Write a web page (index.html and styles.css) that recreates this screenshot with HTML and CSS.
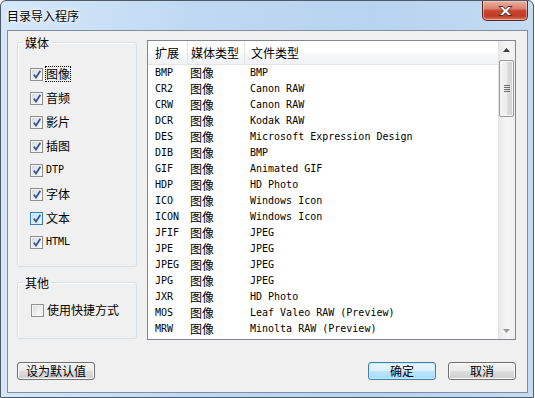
FILE: index.html
```html
<!DOCTYPE html>
<html lang="zh-CN">
<head>
    <meta charset="utf-8" />
    <title>目录导入程序</title>
    <link rel="stylesheet" href="styles.css">
</head>
<body>
    <div class="window">
        <div class="titlebar">
            <span class="title">目录导入程序</span>
            <div class="close">
                <svg width="17" height="12" viewBox="0 0 17 12"><path d="M2 1.5 H6 L8.5 4.2 L11 1.5 H15 L10.6 6 L15 10.5 H11 L8.5 7.8 L6 10.5 H2 L6.4 6 Z" fill="#fff" stroke="#5a2b25" stroke-width="1"/></svg>
            </div>
        </div>

        <div class="client">
            <div class="main">
                <div class="side">
                    <fieldset class="group media">
                        <legend>媒体</legend>
                        <div class="checks">
                            <div class="check"><span class="box on"></span><span class="label focus">图像</span></div>
                            <div class="check"><span class="box on"></span><span class="label">音频</span></div>
                            <div class="check"><span class="box on"></span><span class="label">影片</span></div>
                            <div class="check"><span class="box on"></span><span class="label">插图</span></div>
                            <div class="check"><span class="box on"></span><span class="label mono">DTP</span></div>
                            <div class="check"><span class="box on"></span><span class="label">字体</span></div>
                            <div class="check"><span class="box on hot"></span><span class="label">文本</span></div>
                            <div class="check"><span class="box on"></span><span class="label mono">HTML</span></div>
                        </div>
                    </fieldset>
                    <fieldset class="group other">
                        <legend>其他</legend>
                        <div class="check"><span class="box"></span><span class="label">使用快捷方式</span></div>
                    </fieldset>
                </div>

                <div class="listview">
                    <div class="lv-body">
                        <div class="lv-header">
                            <div class="hcell h1">扩展</div>
                            <div class="hcell h2">媒体类型</div>
                            <div class="hcell h3">文件类型</div>
                        </div>
                        <div class="lv-row"><span>BMP</span><span class="cn">图像</span><span>BMP</span></div>
                        <div class="lv-row"><span>CR2</span><span class="cn">图像</span><span>Canon RAW</span></div>
                        <div class="lv-row"><span>CRW</span><span class="cn">图像</span><span>Canon RAW</span></div>
                        <div class="lv-row"><span>DCR</span><span class="cn">图像</span><span>Kodak RAW</span></div>
                        <div class="lv-row"><span>DES</span><span class="cn">图像</span><span>Microsoft Expression Design</span></div>
                        <div class="lv-row"><span>DIB</span><span class="cn">图像</span><span>BMP</span></div>
                        <div class="lv-row"><span>GIF</span><span class="cn">图像</span><span>Animated GIF</span></div>
                        <div class="lv-row"><span>HDP</span><span class="cn">图像</span><span>HD Photo</span></div>
                        <div class="lv-row"><span>ICO</span><span class="cn">图像</span><span>Windows Icon</span></div>
                        <div class="lv-row"><span>ICON</span><span class="cn">图像</span><span>Windows Icon</span></div>
                        <div class="lv-row"><span>JFIF</span><span class="cn">图像</span><span>JPEG</span></div>
                        <div class="lv-row"><span>JPE</span><span class="cn">图像</span><span>JPEG</span></div>
                        <div class="lv-row"><span>JPEG</span><span class="cn">图像</span><span>JPEG</span></div>
                        <div class="lv-row"><span>JPG</span><span class="cn">图像</span><span>JPEG</span></div>
                        <div class="lv-row"><span>JXR</span><span class="cn">图像</span><span>HD Photo</span></div>
                        <div class="lv-row"><span>MOS</span><span class="cn">图像</span><span>Leaf Valeo RAW (Preview)</span></div>
                        <div class="lv-row"><span>MRW</span><span class="cn">图像</span><span>Minolta RAW (Preview)</span></div>
                    </div>
                    <div class="scrollbar">
                        <div class="arrow">
                            <svg width="7" height="4" viewBox="0 0 7 4"><path d="M0 4 L3.5 0 L7 4 Z" fill="#3c3c3c"/></svg>
                        </div>
                        <div class="thumb">
                            <svg width="6" height="7" viewBox="0 0 6 7"><path d="M0 0.5 H6 M0 2.5 H6 M0 4.5 H6 M0 6.5 H6" stroke="#6e6e6e" stroke-width="1"/></svg>
                        </div>
                        <div class="track"></div>
                        <div class="arrow">
                            <svg width="7" height="4" viewBox="0 0 7 4"><path d="M0 0 L3.5 4 L7 0 Z" fill="#9a9a9a"/></svg>
                        </div>
                    </div>
                </div>
            </div>

            <div class="buttons">
                <button class="btn wide">设为默认值</button>
                <span class="spacer"></span>
                <button class="btn default">确定</button>
                <button class="btn">取消</button>
            </div>
        </div>
    </div>
</body>
</html>
```

FILE: styles.css
```css
* {
    margin: 0px;
    padding: 0px;
    box-sizing: border-box;
}

body {
    width: 535px;
    height: 398px;
    overflow: hidden;
    background: #fff;
    font-family: "Noto Sans CJK SC", sans-serif;
    font-size: 12px;
    color: #000;
}

.window {
    width: 534px;
    height: 398px;
    border: 1px solid #4f5a68;
    border-radius: 6px 6px 0 0;
    padding: 0 5px 0 6px;
    background: linear-gradient(to right, #d6e7f9 0%, #c0d9f3 35%, #b8d3f0 70%, #c4dbf3 100%);
}

.titlebar {
    height: 29px;
    display: flex;
    justify-content: space-between;
    align-items: flex-start;
}

    .titlebar .title {
        padding-top: 8px;
        line-height: 14px;
        font-size: 12px;
        text-shadow: 0 0 6px #fff, 0 0 3px #fff;
    }

.close {
    width: 46px;
    height: 20px;
    border: 1px solid #5a2b25;
    border-top: none;
    border-radius: 0 0 5px 5px;
    background: linear-gradient(#eab0a2 0%, #dc826f 40%, #c8432d 52%, #c33b26 80%, #d77a62 100%);
    box-shadow: inset 0 0 0 1px rgba(255, 220, 210, 0.5);
    display: flex;
    align-items: center;
    justify-content: center;
}

.client {
    height: 363px;
    border: 1px solid #7e8ea3;
    background: #f0f0f0;
    display: flex;
    flex-direction: column;
}

.main {
    display: flex;
    padding: 9px 11px 0 9px;
}

.side {
    width: 120px;
    margin-top: -4px;
}

.group {
    border: 1px solid #d5dfe5;
    border-radius: 3px;
    box-shadow: inset 1px 1px 0 #fff;
    padding: 0 0 0 5px;
    min-width: 0;
}

    .group legend {
        padding: 0 2px;
        line-height: 13px;
        font-size: 12px;
    }

.media {
    padding-bottom: 12px;
}

    .media .checks {
        padding-top: 13px;
    }

.other {
    margin-top: 9px;
    padding-top: 9px;
    padding-bottom: 16px;
}

    .other .check {
        padding-left: 8px;
    }

.check {
    height: 24px;
    display: flex;
    align-items: center;
    padding-left: 7px;
}

.box {
    width: 13px;
    height: 13px;
    border: 1px solid #8e8f8f;
    background: linear-gradient(135deg, #d6d8dc 0%, #f0f0f0 60%, #fbfbfb 100%);
    box-shadow: inset 0 0 0 1px #f4f4f4;
    margin-right: 3px;
    position: relative;
}

    .box.on::after {
        content: "";
        position: absolute;
        left: 2px;
        top: 1px;
        width: 8px;
        height: 9px;
        background: url("data:image/svg+xml;utf8,<svg xmlns='http://www.w3.org/2000/svg' width='8' height='9' viewBox='0 0 8 9'><path d='M0.8 4.6 L3 7.6 L7.3 0.8' fill='none' stroke='%233d5a9c' stroke-width='1.8'/></svg>");
    }

    .box.hot {
        border-color: #3c7fb1;
        background: linear-gradient(135deg, #b9def5 0%, #def1fb 60%, #eef8fe 100%);
        box-shadow: inset 0 0 0 1px #d9eefb;
    }

.label {
    line-height: 14px;
    font-size: 12px;
}

    .label.focus {
        outline: 1px dotted #000;
        outline-offset: 0px;
    }

    .label.mono {
        font-family: "DejaVu Sans Mono", monospace;
        font-size: 10px;
    }

.listview {
    width: 369px;
    height: 300px;
    margin-left: 10px;
    border: 1px solid #828790;
    background: #fff;
    display: flex;
}

.lv-body {
    flex: 1;
    overflow: hidden;
}

.lv-header {
    height: 24px;
    display: flex;
    border-bottom: 1px solid #e5e5e5;
    background: linear-gradient(#ffffff 0%, #ffffff 50%, #f7f8fa 51%, #f1f2f4 100%);
}

.hcell {
    display: flex;
    align-items: center;
    font-size: 12px;
    line-height: 14px;
}

.h1 {
    width: 40px;
    padding-left: 7px;
    border-right: 1px solid #e5e5e5;
}

.h2 {
    width: 57px;
    padding-left: 3px;
    border-right: 1px solid #e5e5e5;
}

.h3 {
    flex: 1;
    padding-left: 6px;
}

.lv-row {
    height: 16px;
    display: grid;
    grid-template-columns: 42px 60px 1fr;
    align-items: center;
    font-family: "DejaVu Sans Mono", monospace;
    font-size: 10px;
    line-height: 16px;
    white-space: nowrap;
}

    .lv-row span:first-child {
        padding-left: 7px;
    }

    .lv-row .cn {
        font-family: "Noto Sans CJK SC", sans-serif;
        font-size: 12px;
    }

.scrollbar {
    width: 17px;
    display: flex;
    flex-direction: column;
    background: linear-gradient(to right, #e3e3e3 0%, #efefef 20%, #f5f5f5 60%, #efefef 100%);
}

    .scrollbar .arrow {
        height: 17px;
        display: flex;
        align-items: center;
        justify-content: center;
    }

.thumb {
    height: 57px;
    margin: 2px 1px 0 1px;
    border: 1px solid #979797;
    border-radius: 2px;
    background: linear-gradient(to right, #f4f4f4 0%, #ececec 50%, #dedede 51%, #d2d2d2 100%);
    box-shadow: inset 0 0 0 1px #f8f8f8;
    display: flex;
    align-items: center;
    justify-content: center;
}

.track {
    flex: 1;
}

.buttons {
    display: flex;
    padding: 22px 11px 0 9px;
}

    .buttons .spacer {
        flex: 1;
    }

.btn {
    height: 18px;
    width: 68px;
    border: 1px solid #707070;
    border-radius: 3px;
    background: linear-gradient(#f2f2f2 0%, #ebebeb 50%, #dddddd 51%, #cfcfcf 100%);
    box-shadow: inset 0 0 0 1px #fbfbfb;
    font-family: "Noto Sans CJK SC", sans-serif;
    font-size: 12px;
    line-height: 14px;
    color: #000;
}

    .btn.wide {
        width: 78px;
    }

    .btn.default {
        margin-right: 12px;
        border-color: #3c7fb1;
        background: linear-gradient(#eaf6fd 0%, #d9f0fc 50%, #bee6fd 51%, #a7d9f5 100%);
        box-shadow: inset 0 0 0 1px #c6ecfd;
    }
```
